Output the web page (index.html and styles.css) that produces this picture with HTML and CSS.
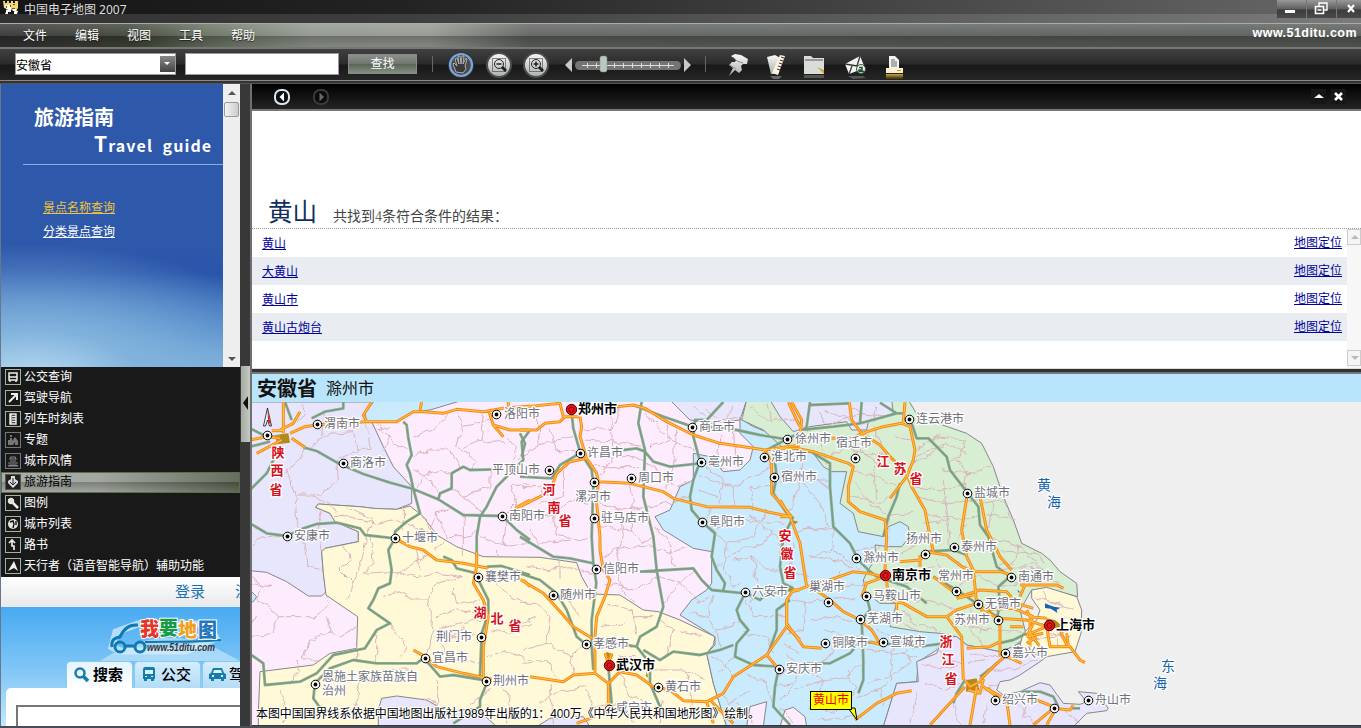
FILE: index.html
```html
<!DOCTYPE html>
<html lang="zh-CN">
<head>
<meta charset="utf-8">
<title>中国电子地图 2007</title>
<link rel="stylesheet" href="styles.css">
</head>
<body>
<header class="titlebar">
  <svg class="app-icon" width="16" height="16" viewBox="0 0 16 16"><path fill="#f4d77a" d="M0 1h2v2h2V1h2v2h2V1h2v2h2V1h3v7l-2 3h-3l-2-2H5L1 8z"/><path fill="#fff" d="M2 5h6v4H3zM5 9h3v3H3v-2zM12 10l3 1-1 3h-3v-2z"/><path fill="#fff" d="M3 12h2v2H2zM10 9h3v2h-3z"/><path fill="#7c4a14" d="M3 6h1v2H3zM7 5h1v2H7zM10 4h2v1h-2zM9 8h3v1H9z"/></svg>
  <span class="app-name">中国电子地图 2007</span>
  <div class="winbtns">
    <span><svg width="29" height="18"><path fill="#fff" d="M8 10h10v3H8z"/></svg></span>
    <span><svg width="29" height="18" fill="none" stroke="#fff"><path stroke-width="1.4" d="M12 6V3h8v7h-3"/><path stroke-width="1.6" d="M8.500 6.500h8v7h-8zM10.500 10h4"/></svg></span>
    <span><svg width="24" height="18"><path stroke="#fff" stroke-width="2.200" d="M11 5l6 7M17 5l-6 7"/></svg></span>
  </div>
</header>
<nav class="menubar">
  <span>文件</span><span>编辑</span><span>视图</span><span>工具</span><span>帮助</span>
  <b class="site">www.51ditu.com</b>
</nav>
<div class="toolbar">
  <div class="combo"><span>安徽省</span><i><svg width="14" height="15"><path fill="#fff" d="M4 6h6l-3 3z"/></svg></i></div>
  <div class="field"></div>
  <div class="find">查找</div>
  <svg class="tools" width="480" height="34" viewBox="0 0 480 34">
    <defs>
      <linearGradient id="lg" x1="0" y1="0" x2="0" y2="1"><stop offset="0" stop-color="#f8f8f8"/><stop offset="1" stop-color="#a9b0aa"/></linearGradient>
      <linearGradient id="gold" x1="0" y1="0" x2="0" y2="1"><stop offset="0" stop-color="#c9a640"/><stop offset="1" stop-color="#332a10"/></linearGradient>
    </defs>
    <path stroke="#5d6d58" d="M3.500 7v16"/>
    <circle cx="32" cy="16" r="13" fill="#333"/><circle cx="32" cy="16" r="11" fill="#4c4c4c" stroke="#78a6e2" stroke-width="2.200"/>
    <path transform="translate(0 -1)" fill="#3a3a3a" stroke="#b9b9b9" stroke-width=".9" d="M27 24l-3-8 1-1 3 3-2-7 2-1 2 6-1-8h2l1 8 1-8h2l-1 8 3-6 1 1-2 7 1 3-3 4z"/>
    <g stroke="#4d4d4d" stroke-width="2" fill="url(#lg)"><circle cx="70" cy="16" r="12"/><circle cx="107" cy="16" r="12"/></g>
    <g fill="none" stroke="#222"><path stroke-dasharray="1 1" d="M63.500 9.500h13v13h-13zM100.500 9.500h13v13h-13z"/><circle cx="70" cy="15" r="4.500"/><circle cx="107" cy="15" r="4.500"/><path stroke-width="1.600" d="M67.500 15h5M104.500 15h5M107 12.500v5"/><path stroke-width="3" d="M73 18l4 4M110 18l4 4"/></g>
    <path fill="#c8c8c8" d="M143 9v14l-7-7zM255 9v14l7-7z"/>
    <rect x="146" y="12" width="106" height="9" rx="4.500" fill="#747474"/>
    <path stroke="#ddd" fill="none" d="M153 16.500h92M158.500 14v5M167.500 14v5M185.500 14v5M194.500 14v5M203.500 14v5M212.500 14v5M221.500 14v5M230.500 14v5M239.500 14v5"/>
    <rect x="171" y="7" width="7" height="16" rx="2" fill="#bcc8bd" stroke="#7d887e" stroke-width=".5"/>
    <path stroke="#5d6d58" d="M276.500 7v16"/>
    <g transform="translate(-1 -1)">
    <path fill="url(#lg)" d="M303 8l4-2 6 1 7 4-1 5-4 0-2 2 1 4-3 3-4-3-6 6 4-8-4-3 3-3 3 0 1-2z"/><path stroke="#879187" fill="none" d="M305 9l4 4 6 2M302 17l6 4"/>
    <path fill="url(#lg)" d="M339 9l8-2 7 4-4 15h-7z"/><path fill="#fff1dd" d="M352 7l5 1-7 19-6-2z"/><path stroke="#333" d="M353 9l3 1M352 12l3 1M351 15l3 1M350 18l3 1M349 21l3 1"/><path fill="#666" d="M342 28h12l-3 3h-6z"/>
    <path fill="#d8ddd8" d="M376 8h7l2 2h11v16h-20z"/><path stroke="#555" d="M377 12h18"/><path fill="#cda442" d="M389 19l7 3v4z"/><path fill="#777" d="M376 27h20v3h-20z" opacity=".6"/>
    <path fill="#f2f2f2" d="M417 16l15-8 5 12-16 6z"/><path stroke="#333" fill="none" stroke-width="1.300" d="M417 16l12 2 3-10M421 26l3-8M429 18l4 2"/><circle cx="433" cy="21" r="4.500" fill="#eee" stroke="#39533d"/><path stroke="#16542a" fill="none" stroke-width="1.500" d="M431 19.500h3v2.500h-3v1.500h5"/><path fill="#555" d="M420 28h15l3 2-13 1z"/>
    <path fill="#f4f4f4" d="M461 8h6l4 4v8h-10z"/><path stroke="#666" d="M463 12h4M463 14h6M463 16h6M463 18h6"/><path fill="#fff0c9" d="M458 20h17v5h-17z"/><path fill="#b89449" d="M469 22h4v1h-4z"/><path fill="url(#gold)" d="M458 26h17v5h-17z"/>
    </g>
  </svg>
</div>
<main class="work">
  <aside class="side">
    <section class="guide">
      <div class="guide-body">
        <h2>旅游指南</h2>
        <h3><big>T</big>ravel&nbsp; guide</h3>
        <hr>
        <a class="gold">景点名称查询</a>
        <a>分类景点查询</a>
      </div>
      <div class="scroll"><i class="up"></i><b></b><i class="down"></i></div>
    </section>
    <ul class="cats">
      <li><svg width="16" height="16" viewBox="1 1 14 14"><path stroke-width="1.500" d="M4 4h8v7H4zM4 8h8M5 11v2M11 11v2"/></svg>公交查询</li>
      <li><svg width="16" height="16" viewBox="1 1 14 14"><path stroke-width="2" d="M4 12l7-7M6 4h6v6"/></svg>驾驶导航</li>
      <li><svg width="16" height="16" viewBox="1 1 14 14"><path stroke-width="1.400" d="M5 3h6v10H5zM7 5.500h4M7 8h4M7 10.500h4M6 3v10"/></svg>列车时刻表</li>
      <li class="dim"><svg width="16" height="16" viewBox="1 1 14 14"><path fill="#777" stroke="none" d="M3 13V8h2V6h2v3l3-4 3 4v4h-3v-3l-2 3zM5 3h2v2H5z"/></svg>专题</li>
      <li class="dim"><svg width="16" height="16" viewBox="1 1 14 14"><path stroke-width="1.200" d="M6 4h4l1 2H5zM5 8h6M3 10h10M5 12h6l2 1H3z"/></svg>城市风情</li>
      <li class="on"><svg width="16" height="16" viewBox="1 1 14 14"><path fill="#ddd" stroke="none" d="M6 2h4v3l3 2v2l-5 5-5-5V7l3-2z"/><path stroke="#222" d="M8 4v7M5 8l3 3 3-3"/></svg>旅游指南</li>
      <li><svg width="16" height="16" viewBox="1 1 14 14"><circle cx="6" cy="6" r="2.800" fill="#ddd"/><path stroke-width="2.500" d="M8 8l5 5"/></svg>图例</li>
      <li><svg width="16" height="16" viewBox="1 1 14 14"><circle cx="8" cy="8" r="5" fill="#e4e4e4" stroke="none"/><path stroke="#111" stroke-width="1.400" d="M5 6l3-1 1 3-1 4M11 5v4"/></svg>城市列表</li>
      <li><svg width="16" height="16" viewBox="1 1 14 14"><path stroke-width="1.700" d="M4 6l3-3 3 3M7 4v5h2v4"/></svg>路书</li>
      <li><svg width="16" height="16" viewBox="1 1 14 14"><path fill="#eee" stroke="none" d="M9 3l4 10-4-3-6 3z"/></svg>天行者（语音智能导航）辅助功能</li>
    </ul>
    <section class="web">
      <div class="login"><span>登录</span><i></i><span>注册</span></div>
      <svg class="logo" width="239" height="54" viewBox="1 607 239 54">
        <path fill="#c5e6fb" opacity=".65" d="M100 661q55-36 110-16l30 16z"/>
        <g stroke="#d9f0ff" stroke-width="7" fill="none" opacity=".7"><path d="M112 647l4-15 22-8h70l8 14-30 13h-66z"/></g>
        <g fill="none" stroke="#0e79b2" stroke-width="3"><path d="M138 625c-10-1-15 5-18 12-6 1-9 3-8 10M126 646h9"/><path stroke-width="2" d="M145 642c25-1 45 1 76-2"/><circle cx="120" cy="647" r="5"/><circle cx="140" cy="647" r="5"/></g>
        <g class="logo-t"><text x="140" y="636" fill="#e83326">我</text><text x="159" y="635" fill="#159c48">要</text><text x="178" y="637" fill="#f0a020">地</text><text x="198" y="637" fill="#2477bd">图</text></g>
        <text class="logo-u" x="147" y="651" textLength="68" lengthAdjust="spacingAndGlyphs">www.51ditu.com</text>
      </svg>
      <div class="tabs">
        <span class="tab act"><svg width="18" height="18" fill="none" stroke="#147da8"><circle cx="7" cy="7" r="4.500" stroke-width="2.500"/><path stroke-width="3.500" d="M10 10l5 5"/></svg>搜索</span>
        <span class="tab"><svg width="18" height="18" fill="#147da8"><path d="M4 1h8q2 0 2 3v9H2V4q0-3 2-3zM3 13h3v2H3zM10 13h3v2h-3z"/><path fill="#dff2fd" d="M4 4h8v4H4zM4 10h2v1H4zM10 10h2v1h-2z"/></svg>公交</span>
        <span class="tab"><svg width="18" height="18" fill="#147da8"><path d="M4 2h9l2 5 2 1v5h-2v2h-3v-2H5v2H2v-2H0V8l2-1z"/><path fill="#dff2fd" d="M5 4h7l1 3H4zM3 9h2v2H3zM12 9h2v2h-2z"/></svg>驾车</span>
      </div>
      <div class="sheet"><div class="q"></div></div>
    </section>
  </aside>
  <div class="split"><div class="grip"><svg width="9" height="76"><path fill="#111" d="M7 30v14l-5-7z"/></svg></div></div>
  <section class="right">
    <div class="navbar">
      <svg width="60" height="24" viewBox="0 0 60 24"><rect x="3" y="5" width="14" height="14" rx="6" fill="#0c1014" stroke="#dbe8ee" stroke-width="2"/><path fill="#fff" d="M12 7.500v9L7.500 12z"/><rect x="42" y="5" width="14" height="14" rx="6" fill="#0c0c0c" stroke="#3a3a3a" stroke-width="2"/><path fill="#666" d="M47.500 7.500v9L52 12z"/></svg>
      <div class="navr"><svg width="15" height="15"><path fill="#fff" d="M3 9h10L8 5z"/></svg><svg width="15" height="15"><path stroke="#fff" stroke-width="2.600" d="M4 4l7 7M11 4l-7 7"/></svg></div>
    </div>
    <div class="results">
      <div class="rhead"><h1>黄山</h1><p>共找到<em>4</em>条符合条件的结果：</p></div>
      <div class="rbody">
        <ul>
          <li><a>黄山</a><a>地图定位</a></li>
          <li><a>大黄山</a><a>地图定位</a></li>
          <li><a>黄山市</a><a>地图定位</a></li>
          <li><a>黄山古炮台</a><a>地图定位</a></li>
        </ul>
        <div class="scroll2"><i class="up"></i><i class="down"></i></div>
      </div>
    </div>
    <div class="bar"></div>
    <div class="place"><b>安徽省</b><span>滁州市</span></div>
    <svg class="map" viewBox="252 402 1109 323" preserveAspectRatio="xMinYMin slice">
      <defs>
        <filter id="w" filterUnits="userSpaceOnUse" x="-30" y="60" width="3400" height="1040" color-interpolation-filters="sRGB"><feTurbulence type="fractalNoise" baseFrequency=".035" numOctaves="2" seed="4"/><feDisplacementMap in="SourceGraphic" scale="22" xChannelSelector="R" yChannelSelector="G"/></filter>
        <g id="city"><circle r="4.300" fill="#fff" stroke="#000"/><circle r="1.900"/></g>
        <g id="cap"><circle r="5.200" fill="#e3131b" stroke="#500"/><circle r="2.500" fill="none" stroke="#700"/></g>
        <g id="gr">
          <path d="M0 175L50 200 90 200M105 96L125 150M185 145L225 125 280 115 280 96M0 230L60 215M160 232L200 243 265 280 340 312 420 338 490 357 565 388 600 410 640 435 757 438 800 480 840 510M490 357L480 310 470 285 485 255 475 205 470 165 460 155M490 357L510 430 470 455 435 485 435 505M0 460L50 490 110 498 160 475 200 462 260 458 330 475 345 495 435 505L415 540 425 600 420 640 385 655 370 690 355 715 420 760 380 780 345 835 250 855 200 910 150 935 45 945 40 880 0 852M0 360L50 310 80 250M565 388L570 370 605 355 605 310 640 290 660 300 735 298M840 180L815 215 820 270 780 310 740 350 710 410 690 440 680 500 680 560M195 940L240 895 310 870 380 880 500 880 520 865 540 885 570 920 610 915 700 930M195 940L190 985 215 1020 260 1030M710 940L690 990 690 1010 610 1060M580 560L605 570 620 595 680 610M710 590L755 588 840 615M680 620L715 690 715 730 695 790 690 920"/>
          <path transform="translate(810)" d="M0 500L50 530 100 560 150 565 220 580 229 600M155 130L160 175 180 245 215 300 220 340 215 500 220 580 229 640 215 750 215 830 220 900M180 250L120 285 95 325 0 320M0 190L15 220 5 260M365 96L355 160 375 240 370 380 400 500 410 600 430 710 410 770 360 800 350 830 290 820M310 240L350 235 375 245 400 275 450 290 540 280M340 105L430 140 517 170M610 96L560 150 525 150 520 200 540 275 520 330 510 380 515 420 545 455M560 170L650 180 720 195 800 208 740 240M545 455L585 490 575 560 590 600 615 640 610 660M360 605L440 600 520 595 545 630 575 660 675 670L650 720 660 750 685 780 650 820 645 860 700 885 775 890M370 840L420 870 460 845 540 855 600 840 640 825M350 830L390 880 390 940 420 1010M775 900L765 950 760 1010 810 1065M675 668L720 690 740 670 810 660M820 440L790 500 780 590 790 640 820 655M810 690L770 720 770 780 745 850M0 610L60 630 110 670 140 720 170 800 200 825M265 890L275 1000M763 260L770 320 760 370 800 430"/>
          <path transform="translate(1590)" d="M90 96L80 170 60 190 22 205M245 96L240 160 160 170 60 180M90 105L210 100M240 160L350 130 300 98M350 130L370 130M100 250L150 280 150 350 160 470 210 520 235 570 265 600 290 620M395 160L410 205 445 205 500 260 510 300 560 365 595 410 600 465 625 500 650 590 690 620L655 650 660 700 650 750M360 340L350 380 325 440 310 500M430 545L520 540 560 555M260 680L270 720 245 750 250 870 250 930 235 970M80 880L150 880 210 850 240 815 300 820 420 830 490 820M290 620L380 650 440 700M460 620L530 660 590 700 650 740M600 920L640 890 680 855M655 820L700 810 740 790M725 965L780 965 820 980 835 1010M875 1015L900 1015M555 930L530 970 520 1000"/>
        </g>
        <g id="or">
          <path d="M0 210L50 200 90 205M100 96L100 190M90 180L130 160 150 125M20 250L95 210M65 182L100 182M120 190L165 170 200 165 345 155 440 155 490 125 520 125 580 130 620 118 700 125 760 115 840 108M125 205L165 232M365 96L340 135 350 155M510 120L515 96M775 96L775 110M717 125L730 165 760 200M730 165L780 180 840 180M435 505L480 530 520 540 560 570 640 580 715 595M680 545L680 590 670 640 700 690 715 740 700 830 700 930M490 840L525 860 560 890 640 910 725 928M795 415L840 390M820 630L840 650"/>
          <path transform="translate(810)" d="M0 180L50 180 75 160 120 155 135 140M20 110L120 100 130 140 180 140M290 110L340 105 375 115 440 155 520 195 600 220 735 240 840 225M180 140L185 170 180 200 200 265 230 310 235 335M200 265L150 275 110 310 90 365 0 410M235 335L330 340 430 365 460 385 560 410 690 412 740 425 815 440M235 335L230 400 240 500 240 540 250 600 270 630 255 680 230 740 225 800 225 910M0 628L70 670 125 730 160 770 225 810M30 920L130 935 160 915 225 910 265 940 300 905 350 915 400 950 450 960 490 992 560 995 610 970 640 920 740 855 800 770 800 690 820 660 840 660M265 940L265 1000M225 1040L170 1060M560 995L580 1060M570 990L640 1060M740 855L770 890M800 770L840 810M735 240L755 280 755 370 815 440M255 850L265 880 275 850M805 96L830 150 840 170"/>
          <path transform="translate(1590)" d="M0 235L50 235 100 245 205 280 220 290 205 350 205 395 240 425 315 450 320 500 315 600M35 96L65 150 60 200 50 230M208 96L215 150 245 190 300 225 330 260 380 310 395 350 435 420 450 500 460 545M245 190L310 170 365 160 390 170 405 240 400 270 380 320 330 385M375 96L370 155M155 205L220 205 245 190M0 390L30 440 60 520 80 650M0 440L30 440M80 650L150 630 220 605 265 610 310 620M80 650L40 665M20 690L20 760 70 830 125 835M100 655L150 690 190 725 240 750 275 780 300 820M360 575L420 570 440 545 500 555 545 590 580 605 660 605 695 615M420 555L420 590M560 385L545 480 560 560 580 600 590 700M600 380L620 480 660 560 695 600M320 630L325 690 370 700 440 740 500 740 530 720 590 700M350 690L350 720M500 740L545 800 550 930M300 625L260 640 245 680M460 620L540 680 600 660 680 665 710 700 760 715M530 685L580 675M590 700L650 745 740 750 800 770M560 835L630 830 660 815M660 760L660 860M680 855L650 880 600 930M680 860L725 880M720 645L830 645 850 655M735 645L720 680M690 770L730 770M740 720L760 760 740 800M750 750L750 830M750 740L800 745M800 770L750 790 780 830M800 770L810 830 870 830 900 870 915 878M840 780L860 825M860 790L865 825M740 800L790 790M600 720L700 715 760 740M740 820L770 800M450 1065L500 1010 555 950M570 1065L590 950M610 950L650 980M620 955L680 990 690 1065M555 930L570 950 610 930 600 970 565 960M760 1065L820 1015 870 1020 880 1005M770 990L820 1010M825 1020L800 1065M225 1050L290 1000 350 970 395 962M270 815L305 825"/>
        </g>
      </defs>
      <g transform="translate(250 370) scale(.33333)">
        <g class="land">
          <path class="pink" d="M0 90H1900V1070H0z"/>
          <path class="lav" d="M0 96H365L340 140 365 155 400 230 430 290 485 350 485 400 440 418 370 415 330 410 205 402 197 412 240 430 255 455 325 485 325 515 225 535 215 545 220 610 228 665 215 678 175 678 110 635 50 607 0 602z"/>
          <path class="blue" d="M375 90L345 130 350 155 435 155 490 125 540 120 640 90zM0 660L20 680 10 695 0 698z"/>
          <path class="yel" d="M197 412L205 402 330 410 370 415 440 418 480 408 520 440 560 495 620 530 700 560 870 562 980 578 995 620 1025 672 1110 675 1180 720 1225 725 1290 750 1395 800 1390 825 1370 850 1390 940 1430 1070H25L25 1030 30 905 190 885 240 850 320 835 323 740 228 675 220 610 215 545 225 535 325 515 325 485 255 455 240 430z"/>
          <path class="lav" d="M385 1070L385 1020 395 985 440 978 530 990 590 1025 680 1015 740 1070zM860 1070L900 1045 1000 1040 1020 1070z"/>
          <path class="lav" d="M1260 90L1320 150 1380 160 1470 150 1490 90z"/>
          <path class="blue" d="M1470 145L1510 170 1600 205 2120 300 2120 840 2060 840 2005 875 2000 935 1940 940 1900 1070H1430L1390 940 1370 850 1395 825V800L1290 735 1325 690 1370 660 1385 640 1385 545 1330 535 1240 480 1215 440 1260 420 1290 350 1330 330 1330 250 1380 260 1420 305 1470 300 1500 270 1510 230 1470 190z"/>
          <path class="pink" d="M1490 1070L1500 1010 1550 995 1540 1070zM1590 1070L1605 1020 1630 1012 1665 1040 1670 1070z"/>
          <path class="green" d="M1490 90L1475 150 1540 180 1595 230 1690 250 1720 290 1745 305 1790 305 1770 400 1810 430 1825 485 1900 500 1915 470 1950 455 1975 470 1980 500 1955 530 1915 530 1875 525 1880 560 1855 600 1840 630 1845 665 1890 700 1940 700 1920 770 2010 785 2070 790 2120 800 2150 825 2250 845 2290 830 2330 800 2310 720 2345 660 2390 655 2483 680 2480 640 2430 605 2400 570 2375 550 2315 520 2290 450 2260 380 2230 290 2195 220 2150 190 2005 140 1975 90z"/>
          <path class="lav" d="M1560 90L1590 140 1630 185 1680 170 1790 155 1805 180 1850 180 1855 155 1930 130 1925 90z"/>
          <path class="lav" d="M1900 1070L1940 940 2005 935 2000 875 2060 850 2080 800 2120 800 2150 825 2250 845 2290 830 2330 810 2340 850 2390 860 2370 875 2310 915 2280 930 2250 935 2240 960 2260 975 2310 965 2370 938 2400 945 2440 1000 2490 1003 2510 995 2485 965 2540 970 2575 1015 2570 1022 2510 1030 2470 1070z"/>
          <path class="yel" d="M2345 660L2390 652 2480 680 2495 720 2493 790 2475 845 2390 860 2330 840 2310 825 2320 790 2360 750 2370 720 2345 685z"/>
        </g>
        <g class="minor" filter="url(#w)">
          <path d="M170 235L150 270 110 300 135 370 140 450 165 520 175 590 220 600M180 230L240 190 310 185 325 240 260 270 265 330 215 375 140 375M150 100L170 130 140 150M220 120L215 200M325 240L360 235 350 160M0 540L20 505 110 498M215 420L200 480 215 540M190 380L240 400 260 430M290 410L370 445 350 500 330 590 290 685M280 520L300 570 270 600 310 640M250 440L300 440 380 460 430 450 500 470 560 500M360 500L370 580 340 610 420 605 500 620 560 610 640 620M440 620L460 600 530 560M400 680L440 665 490 690 530 690 560 640 640 620M530 690L550 760 540 830 520 860M420 760L470 830 450 860M550 780L640 760 700 750M560 740L620 720 690 730M610 660L620 700 690 690M560 800L600 860 690 880M640 770L600 800 680 800M720 780L780 790 840 760M710 860L760 840 840 870M740 640L780 680 840 700M730 920L780 980 770 1060M720 960L660 1000M560 930L560 1000 520 980M380 880L380 780M320 870L320 830M270 900L330 940 400 900 480 900M330 940L320 1000 270 1030M90 960L110 1010 100 1060M120 940L150 900 140 870M0 620L40 650 20 690 60 710 85 740 200 740 240 700 230 680M85 740L70 790 0 800M230 740L240 780 180 810 160 870 210 870M320 770L270 800 240 780M0 640L60 650M0 780L20 740"/>
          <path d="M380 160L440 230 475 230M485 260L540 240 600 240 630 290M490 200L550 180 600 130M620 125L640 170 720 150M640 170L620 230 680 270 660 300M700 130L690 210 640 230M760 200L800 230 780 300M690 210L760 220M720 300L720 350 640 380 600 350M640 380L680 410 700 430M600 410L560 430 540 480 510 430M560 430L590 500 560 540M590 500L660 500 680 480M690 500L760 530 840 520M760 530L770 440M740 540L740 560M760 440L800 400 780 350 840 340M380 180L420 170M420 200L400 240M500 360L520 320 570 300 600 310M490 300L540 330 570 370M430 510L500 540 510 600M460 480L460 410M640 435L640 560"/>
          <g transform="translate(810)"><path d="M185 180L280 175 300 110M190 210L270 215 370 230M270 110L280 260 240 320M215 290L360 290M280 260L340 260 400 290 470 350 520 330M375 130L440 200 520 240M430 140L450 210 390 230M470 180L460 290 440 360M330 330L340 400 330 480 370 520 400 500M235 400L300 420 370 410 450 400 510 380M240 470L330 480M250 560L300 530 390 530 450 550 500 530M300 420L310 500 290 560 300 650 340 700M260 640L340 660 420 620 480 640 540 700M430 700L480 640 520 600M400 470L450 520 460 590M150 390L210 400M150 390L100 440 110 500 200 510M100 440L30 430 0 440M30 480L60 520 150 510M130 300L130 380 60 400M10 350L60 350 80 380M0 270L60 220 160 200M60 220L50 130M90 180L110 240 170 250M20 590L80 600 150 590 220 610M120 560L120 630M0 700L50 700 90 740 80 820 150 860 190 830M50 740L0 760M80 820L10 840M150 860L160 910M10 880L80 870 110 930M180 740L150 700 180 650M260 700L340 720 350 790M240 770L320 760M240 830L340 830M290 900L300 860 350 860M300 910L330 980 390 1000M60 1000L120 960 200 950M90 940L100 1060M200 960L220 1010 300 1000 340 1060M400 900L500 900 560 930M440 860L460 780 420 750M470 780L550 800M500 900L520 1000 480 1050M430 990L420 1060M350 770L340 740 400 740"/>
          <path d="M560 120L600 150 670 140M520 110L560 140M640 110L620 150M690 110L740 150 830 150M740 100L760 160M600 200L590 280 620 300M640 180L650 280M560 290L610 330 600 400M540 320L640 350 740 300 760 260M640 350L640 410M570 410L560 460 620 520 700 500 740 420M540 360L590 380M700 420L690 350 750 350M690 440L770 500 780 560M590 480L670 450 790 460M620 520L610 600 640 650 660 640M590 590L660 540 730 520 760 480M640 570L700 560 740 600 790 600M700 560L710 640M580 680L560 740 590 780 660 760M530 700L570 680M560 740L510 730M680 690L700 740 760 740M670 790L740 800 760 850M690 700L700 680M590 780L600 830M580 860L630 900 640 920M650 860L620 880 590 920M680 910L740 940 760 1000M690 960L630 1000 610 980M650 1000L700 1060M770 950L820 940M790 820L840 850M770 740L800 740"/></g>
          <g transform="translate(1590)"><path d="M130 120L210 150M120 130L140 170 230 130 340 140M210 110L290 150M290 110L280 160M20 150L60 160 120 210 140 280M70 270L60 330 150 330M0 330L60 330 40 400 20 430M60 330L120 400 150 470 70 480M60 290L150 360M150 260L200 230 250 250 340 260M220 300L290 320 350 350M220 330L270 400 320 430M210 380L300 400 320 380M300 250L280 320 290 390M260 190L240 240 290 280M340 200L390 210M300 220L280 170M410 210L470 200 560 210 540 260 510 270M410 240L480 190M410 260L500 220 560 250M400 280L490 230M480 300L590 310 630 290M530 270L560 310 550 360M400 350L480 360 560 340M410 380L490 400 590 390M490 330L500 450 430 460M440 430L540 450 600 430M500 450L510 540M560 460L530 510M600 400L670 390 690 440M620 430L710 450M640 390L630 470 610 480M630 500L720 530 700 580 660 580M640 540L760 550 800 580M720 530L790 600 720 590M660 600L760 580 850 650M330 490L320 440 400 430M330 570L400 530 440 500 440 470M340 600L420 600 460 590M350 650L450 620M470 570L480 610 550 600M500 560L560 590M370 720L400 760 480 780M410 690L480 700 530 720M520 760L640 780 720 790M570 710L560 760 610 830M540 640L590 620 650 640M660 650L720 640M610 740L600 790"/>
          <path d="M160 480L110 470 40 490M160 480L160 540 90 560M160 540L240 600M40 520L30 600 80 620M90 560L180 570 220 600M220 540L300 530M180 600L160 640M30 690L80 700 130 690M80 700L70 780 20 790M90 750L170 740 220 760M130 780L200 800 240 800M100 670L90 630M170 800L150 860 100 880M180 650L260 640M230 690L160 680M280 720L340 740 420 790M290 780L400 830M260 840L350 850 410 860M340 830L330 920 260 940M380 840L390 880 330 920M20 850L60 890 40 950 0 990M60 890L130 930 200 920 260 870M50 960L130 930M130 930L110 1000 80 1010M200 900L230 960 190 1000 160 1030 110 1010M230 980L300 960 340 920M300 960L310 1010M110 1050L220 1040M0 1010L40 1060M20 890L0 920M420 880L480 900 530 890M430 940L500 960 540 940M410 970L390 1060M470 830L500 870 550 880M560 850L650 860M570 880L620 870M620 900L700 900 770 870M610 960L660 940M700 1000L740 1030M750 990L730 1040 770 1060M850 1020L900 1060M620 1000L610 1060M520 1000L540 1065M790 660L800 690 880 720M750 680L840 700M770 810L830 800 870 780M820 790L840 830M800 790L870 800M780 760L840 770"/></g>
        </g>
        <path class="town" d="M75 195l40-5 5 28-38 5zM1590 655l30-5 20 10-35 8zM1625 450l20 5-10 8zM2150 930l30-5 8 35-40 5zM2390 745l25 5 25 20-30 5-25-10zM1070 845l20 10-10 18-15-10zM1190 905l5 18-8-5z"/>
        <path class="lake" d="M2385 700l12 5 15 5 20 3-12 6 2 10-12-8-8-5-17-2zM2302 660l6 3v8z"/>
        <use href="#gr" class="g1"/><use href="#gr" class="g2"/><use href="#or" class="o1"/><use href="#or" class="o2"/>
      </g>
      <path d="M267.500 408l-4 18h2l2-6 2 6h2z" fill="#fff" stroke="#111" stroke-width=".8"/><path d="M267.500 409l3.500 17-3-5z" fill="#d22"/>
      <g>
        <use href="#city" x="317.500" y="424.500"/><use href="#city" x="267.500" y="435.500"/><use href="#city" x="343.500" y="463.500"/><use href="#city" x="287.500" y="536.500"/><use href="#city" x="395.500" y="538.500"/><use href="#city" x="478.500" y="577.500"/><use href="#city" x="481.500" y="637.500"/><use href="#city" x="425.500" y="658.500"/><use href="#city" x="486.500" y="681.500"/><use href="#city" x="315.500" y="684.500"/><use href="#city" x="496.500" y="414.500"/><use href="#city" x="549.500" y="470.500"/><use href="#city" x="502.500" y="516.500"/><use href="#city" x="580.500" y="453.500"/><use href="#city" x="594.500" y="482.500"/><use href="#city" x="631.500" y="478.500"/><use href="#city" x="594.500" y="518.500"/><use href="#city" x="596.500" y="569.500"/><use href="#city" x="553.500" y="595.500"/><use href="#city" x="586.500" y="644.500"/><use href="#city" x="658.500" y="687.500"/><use href="#city" x="609.500" y="709.500"/><use href="#city" x="692.500" y="427.500"/><use href="#city" x="701.500" y="462.500"/><use href="#city" x="702.500" y="522.500"/><use href="#city" x="745.500" y="592.500"/><use href="#city" x="779.500" y="669.500"/><use href="#city" x="764.500" y="457.500"/><use href="#city" x="774.500" y="477.500"/><use href="#city" x="787.500" y="439.500"/><use href="#city" x="855.500" y="458.500"/><use href="#city" x="909.500" y="419.500"/><use href="#city" x="967.500" y="493.500"/><use href="#city" x="954.500" y="547.500"/><use href="#city" x="925.500" y="554.500"/><use href="#city" x="856.500" y="558.500"/><use href="#city" x="956.500" y="591.500"/><use href="#city" x="1011.500" y="577.500"/><use href="#city" x="978.500" y="604.500"/><use href="#city" x="998.500" y="620.500"/><use href="#city" x="866.500" y="596.500"/><use href="#city" x="828.500" y="602.500"/><use href="#city" x="860.500" y="619.500"/><use href="#city" x="883.500" y="642.500"/><use href="#city" x="825.500" y="643.500"/><use href="#city" x="1005.500" y="653.500"/><use href="#city" x="995.500" y="700.500"/><use href="#city" x="1054.500" y="708.500"/><use href="#city" x="1088.500" y="700.500"/>
        <use href="#cap" x="571.500" y="409.500"/><use href="#cap" x="609.500" y="665.500"/><use href="#cap" x="885.500" y="575.500"/><use href="#cap" x="1049.500" y="625.500"/>
      </g>
      <g class="lab">
        <text x="324" y="428">渭南市</text><text x="350" y="467">商洛市</text><text x="294" y="540">安康市</text><text x="402" y="542">十堰市</text><text x="485" y="581">襄樊市</text><text x="436" y="641">荆门市</text><text x="432" y="662">宜昌市</text><text x="493" y="685">荆州市</text><text x="322" y="681">恩施土家族苗族自</text><text x="322" y="695">治州</text><text x="504" y="418">洛阳市</text><text x="492" y="474">平顶山市</text><text x="509" y="520">南阳市</text><text x="587" y="457">许昌市</text><text x="575" y="501">漯河市</text><text x="638" y="482">周口市</text><text x="601" y="522">驻马店市</text><text x="603" y="573">信阳市</text><text x="560" y="599">随州市</text><text x="593" y="648">孝感市</text><text x="665" y="691">黄石市</text><text x="616" y="712">咸宁市</text><text x="699" y="431">商丘市</text><text x="708" y="466">亳州市</text><text x="709" y="526">阜阳市</text><text x="752" y="596">六安市</text><text x="786" y="673">安庆市</text><text x="771" y="461">淮北市</text><text x="781" y="481">宿州市</text><text x="795" y="443">徐州市</text><text x="836" y="447">宿迁市</text><text x="916" y="423">连云港市</text><text x="974" y="497">盐城市</text><text x="961" y="551">泰州市</text><text x="906" y="543">扬州市</text><text x="863" y="562">滁州市</text><text x="938" y="580">常州市</text><text x="1018" y="581">南通市</text><text x="985" y="608">无锡市</text><text x="954" y="624">苏州市</text><text x="873" y="600">马鞍山市</text><text x="809" y="591">巢湖市</text><text x="867" y="623">芜湖市</text><text x="890" y="646">宣城市</text><text x="832" y="647">铜陵市</text><text x="1012" y="657">嘉兴市</text><text x="1002" y="704">绍兴市</text><text x="1095" y="704">舟山市</text>
      </g>
      <g class="lab capl"><text x="578" y="413">郑州市</text><text x="616" y="669">武汉市</text><text x="892" y="579">南京市</text><text x="1056" y="629">上海市</text></g>
      <g class="lab prov"><text x="278" y="457">陕</text><text x="277" y="475">西</text><text x="276" y="494">省</text><text x="549" y="494">河</text><text x="554" y="512">南</text><text x="565" y="525">省</text><text x="480" y="617">湖</text><text x="497" y="623">北</text><text x="515" y="630">省</text><text x="785" y="540">安</text><text x="787" y="558">徽</text><text x="790" y="577">省</text><text x="883" y="466">江</text><text x="900" y="473">苏</text><text x="916" y="483">省</text><text x="946" y="646">浙</text><text x="948" y="664">江</text><text x="951" y="683">省</text></g>
      <g class="lab sea"><text x="1044" y="490">黄</text><text x="1054" y="507">海</text><text x="1168" y="671">东</text><text x="1160" y="688">海</text></g>
      <path d="M848 708l9 12-2-12z" fill="#ff0" stroke="#000"/><rect x="810.500" y="691.500" width="41" height="18" fill="#ff0" stroke="#000"/><text class="pin" x="813" y="704">黄山市</text>
      <text class="copy" x="256" y="718" textLength="504">本图中国国界线系依据中国地图出版社1989年出版的1：400万《中华人民共和国地形图》绘制。</text>
    </svg>
  </section>
</main>
<footer class="foot"></footer>
</body>
</html>
```
FILE: styles.css
```css
* { box-sizing: border-box; margin: 0; padding: 0; }
body { width: 1361px; height: 728px; overflow: hidden; display: flex; flex-direction: column; background: #383838; font: 12px/16px "Liberation Sans", "Noto Sans CJK SC", sans-serif; }
svg { display: block; flex: none; }
ul { list-style: none; }
.titlebar { height: 23px; flex: none; display: flex; align-items: flex-start; background: linear-gradient(#ffffff00 14px, #ffffff20 14px), linear-gradient(90deg, #151515, #232323 30%, #404040 60%, #686868); }
.app-icon { margin-left: 3px; }
.app-name { margin: 2px 0 0 5px; color: #ddd; font-family: "Noto Sans", "Noto Sans CJK SC", sans-serif; }
.winbtns { margin-left: auto; display: flex; height: 18px; background: linear-gradient(#999, #5e5e5e 50%, #3c3c3c 55%, #4a4a4a); }
.winbtns span + span { border-left: 1px solid #777; }
.menubar { height: 26px; flex: none; display: flex; align-items: flex-start; padding: 3px 4px 0 23px; gap: 28px; color: #fff; border-top: 1px solid #aaa; border-bottom: 2px solid #777; background: linear-gradient(#ffffff30, #ffffff10 12px, #00000040 12px, #00000018), linear-gradient(90deg, #303030, #3c4235 130px, #66705f 210px, #8e948b 310px, #92968f 430px, #5c605b 530px, #565a56); }
.menubar span { text-shadow: 0 1px 1px #222; font-family: "Noto Sans CJK SC", sans-serif; }
.site { margin: 1px 0 0 auto; font: bold 12.500px/10px "Liberation Sans", sans-serif; letter-spacing: .45px; }
.toolbar { height: 35px; flex: none; display: flex; align-items: flex-start; padding-left: 15px; border-bottom: 1px solid #555; background: linear-gradient(#404040, #2b2b2b 15px, #181818 16px, #262626 31px, #888 31px, #888 32px, #333 32px); }
.combo { width: 161px; height: 22px; margin-top: 4px; background: #fff; border: 1px solid #999; display: flex; justify-content: space-between; padding: 2px 0 0; }
.combo i { width: 15px; height: 16px; background: linear-gradient(#888, #444); }
.combo span { line-height: 20px; }
.field { width: 154px; height: 22px; margin: 4px 0 0 9px; background: #fff; border: 1px solid #999; }
.find { width: 69px; height: 20px; margin: 5px 0 0 9px; color: #fff; text-align: center; line-height: 19px; border: 1px solid #8a8a8a; background: linear-gradient(#8e8e8e, #6d776c 50%, #596357 50%, #82907e); }
.tools { margin-left: 12px; }
.work { flex: 1; display: flex; min-height: 0; }
.side { width: 240px; flex: none; display: flex; flex-direction: column; border-left: 1px solid #68788a; overflow: hidden; }
.guide { height: 283px; flex: none; display: flex; }
.guide-body { width: 222px; color: #fff; background: radial-gradient(ellipse 290px 140px at 30px 300px, #bfe0f3, #82b3dd 38%, #4c80c600 100%), linear-gradient(#2e58aa 58%, #2a55ab 67%, #4c84c6 87%, #7aaeda); }
h2 { font: bold 20px/26px "Noto Sans CJK SC", sans-serif; margin: 20px 0 0 33px; }
h3 { font: bold 16px/26px "Noto Sans CJK SC", sans-serif; letter-spacing: 1.100px; margin-left: 93px; white-space: nowrap; }
h3 big { font-size: 21px; }
.guide hr { border: 0; height: 1px; background: #90abe0; margin: 6px 0 35px 22px; }
.guide a { display: block; width: 72px; margin: 0 0 8px 42px; text-decoration: underline; white-space: nowrap; }
.guide a.gold { color: #f0c43a; }
.scroll { width: 17px; background: #eee; display: flex; flex-direction: column; align-items: center; }
.scroll b { width: 15px; height: 15px; margin-top: 7px; border: 1px solid #999; border-radius: 2px; background: linear-gradient(90deg, #f4f4f4, #ccc); }
.up, .down { border: 4px solid transparent; width: 0; height: 0; }
.up { border-top: 0; border-bottom-color: #555; margin-top: 7px; }
.down { border-bottom: 0; border-top-color: #555; margin: auto 0 6px; }
.cats { height: 210px; flex: none; background: #191919; color: #fff; }
.cats li { height: 21px; display: flex; align-items: center; gap: 3px; padding-left: 4px; white-space: nowrap; line-height: 21px; }
.cats svg { border: 1px solid #a8b0a4; fill: none; stroke: #eee; margin-bottom: 2px; overflow: hidden; }
.cats .dim svg { stroke: #888; border-color: #777; }
.cats .on { color: #000; border: 1px solid #5b6e45; padding-left: 3px; background: linear-gradient(#ffffff18 45%, #00000030 50%, #ffffff10), linear-gradient(90deg, #a0a59e, #9a9f98 40%, #555f4e); }
.cats .on svg { background: #222; border-color: #555; }
.web { flex: 1; min-height: 0; overflow: hidden; background: linear-gradient(#fff 0, #e9e9e9 30px, #48aaf1 30px, #82c7f7 95px, #c5e8fc 150px); }
.login { height: 30px; display: flex; align-items: center; padding-left: 174px; color: #1872b4; font-size: 15px; white-space: nowrap; }
.login i { width: 1px; height: 12px; margin: -4px 17px 0 13px; background: #4a6fae; }
.logo-t { font: 900 19px "Noto Sans CJK SC", sans-serif; stroke: #fff; stroke-width: 2px; paint-order: stroke; }
.logo-u { font: italic bold 10px "Liberation Sans", sans-serif; fill: #333; }
.tabs { display: flex; gap: 1px; margin-left: 65px; }
.tab { flex: none; width: 67px; height: 27px; border: 1px solid #8ccaf0; border-bottom: 0; border-radius: 5px 5px 0 0; background: linear-gradient(#d3edfd, #b3dcf7); display: flex; align-items: center; gap: 2px; padding-left: 6px; font-size: 15px; font-weight: 500; color: #000; white-space: nowrap; }
.tab.act { background: linear-gradient(#e4f4fe, #fff); font-weight: bold; }
.sheet { background: #fff; margin-left: 5px; height: 40px; border-radius: 5px 0 0; padding: 17px 0 0 10px; }
.q { height: 30px; border: 2px solid #777; border-right: 0; }
.split { width: 10px; flex: none; padding: 282px 0 0 1px; background: #383838; }
.grip { height: 76px; background: linear-gradient(90deg, #a4aaa2, #c5cac3); }
.right { width: 1111px; display: flex; flex-direction: column; border-left: 2px solid #707070; }
.navbar { height: 27px; flex: none; display: flex; justify-content: space-between; padding: 1px 15px 0 20px; background: linear-gradient(#000, #242424); border-bottom: 2px solid #777; }
.navr { display: flex; gap: 5px; padding-top: 4px; }
.navr svg { background: #161616; }
.results { height: 257px; flex: none; background: #fff; }
.rhead { height: 118px; display: flex; align-items: flex-end; border-bottom: 1px dotted #999; padding-left: 16px; gap: 16px; }
h1 { font: 400 24.500px/34px "Noto Sans CJK SC", sans-serif; color: #102f60; }
.rhead p { font-size: 14px; line-height: 24px; color: #444; }
.rhead em { font: 14px "Liberation Serif", serif; color: #665; }
.rbody { display: flex; height: 139px; }
.rbody ul { flex: 1; }
.rbody li { height: 28px; display: flex; justify-content: space-between; align-items: center; padding: 0 5px 0 10px; color: #00009c; text-decoration: underline; }
.rbody li a:first-child { padding-top: 1px; }
.rbody li:nth-child(even) { background: #e9edf1; }
.scroll2 { width: 14px; background: #f7f7f7; display: flex; flex-direction: column; justify-content: space-between; }
.scroll2 i { display: block; width: 14px; height: 16px; margin: 0; border: 1px solid #ccc; background: #f5f5f5; }
.scroll2 .down { margin-bottom: 2px; }
.scroll2 i::after { content: ""; display: block; margin: 5px 0 0 3px; width: 0; border: 4px solid transparent; border-top: 0; border-bottom-color: #bbb; }
.scroll2 .down::after { border-top: 4px solid #bbb; border-bottom: 0; }
.bar { height: 6px; flex: none; border-top: 1px solid #ddd; border-bottom: 2px solid #777; background: #333; }
.place { height: 28px; flex: none; background: #b8e5fb; display: flex; padding-left: 5px; gap: 9px; align-items: center; font-size: 16px; color: #111; }
.place b { font: bold 20px/26px "Noto Sans CJK SC", sans-serif; }
.place span { padding-top: 2px; }
.map { width: 1109px; height: 323px; background: #efefef; }
.land path { stroke: #86868c; stroke-width: 3px; }
.land .pink { fill: #fdecfd; }
.land .lav { fill: #e8e6fc; }
.land .blue { fill: #c9ebfd; }
.land .yel { fill: #fff9d8; }
.land .green { fill: #d8eed2; }
.minor path { fill: none; stroke: #dab4bc; stroke-width: 3px; stroke-linejoin: round; }
.town { fill: #b08a1c; }
.lake { fill: #1763b4; }
.g1, .g2, .o1, .o2 { fill: none; stroke-linejoin: round; }
.g1 { stroke: #8fb096; stroke-width: 8.500px; }
.g2 { stroke: #799b80; stroke-width: 4px; }
.o1 { stroke: #f58a1c; stroke-width: 9px; }
.o2 { stroke: #ffc83c; stroke-width: 3px; }
.lab text { font: 12px "Noto Sans CJK SC", sans-serif; fill: #70707a; stroke: #fff; stroke-width: 2.500px; paint-order: stroke; stroke-linejoin: round; }
.lab.capl text { font-weight: bold; font-size: 13px; fill: #000; }
.lab.prov text { font-weight: bold; font-size: 13px; fill: #d4121e; text-anchor: middle; }
.lab.sea text { font-size: 14px; fill: #1462ae; text-anchor: middle; }
.pin { font: 12px "Noto Sans CJK SC", sans-serif; fill: #e00; }
.copy { font: 12px "Liberation Sans", "Noto Sans CJK SC", sans-serif; fill: #000; stroke: #fff; stroke-width: 2px; paint-order: stroke; }
.foot { height: 2px; flex: none; background: #4a4d58; }
```
